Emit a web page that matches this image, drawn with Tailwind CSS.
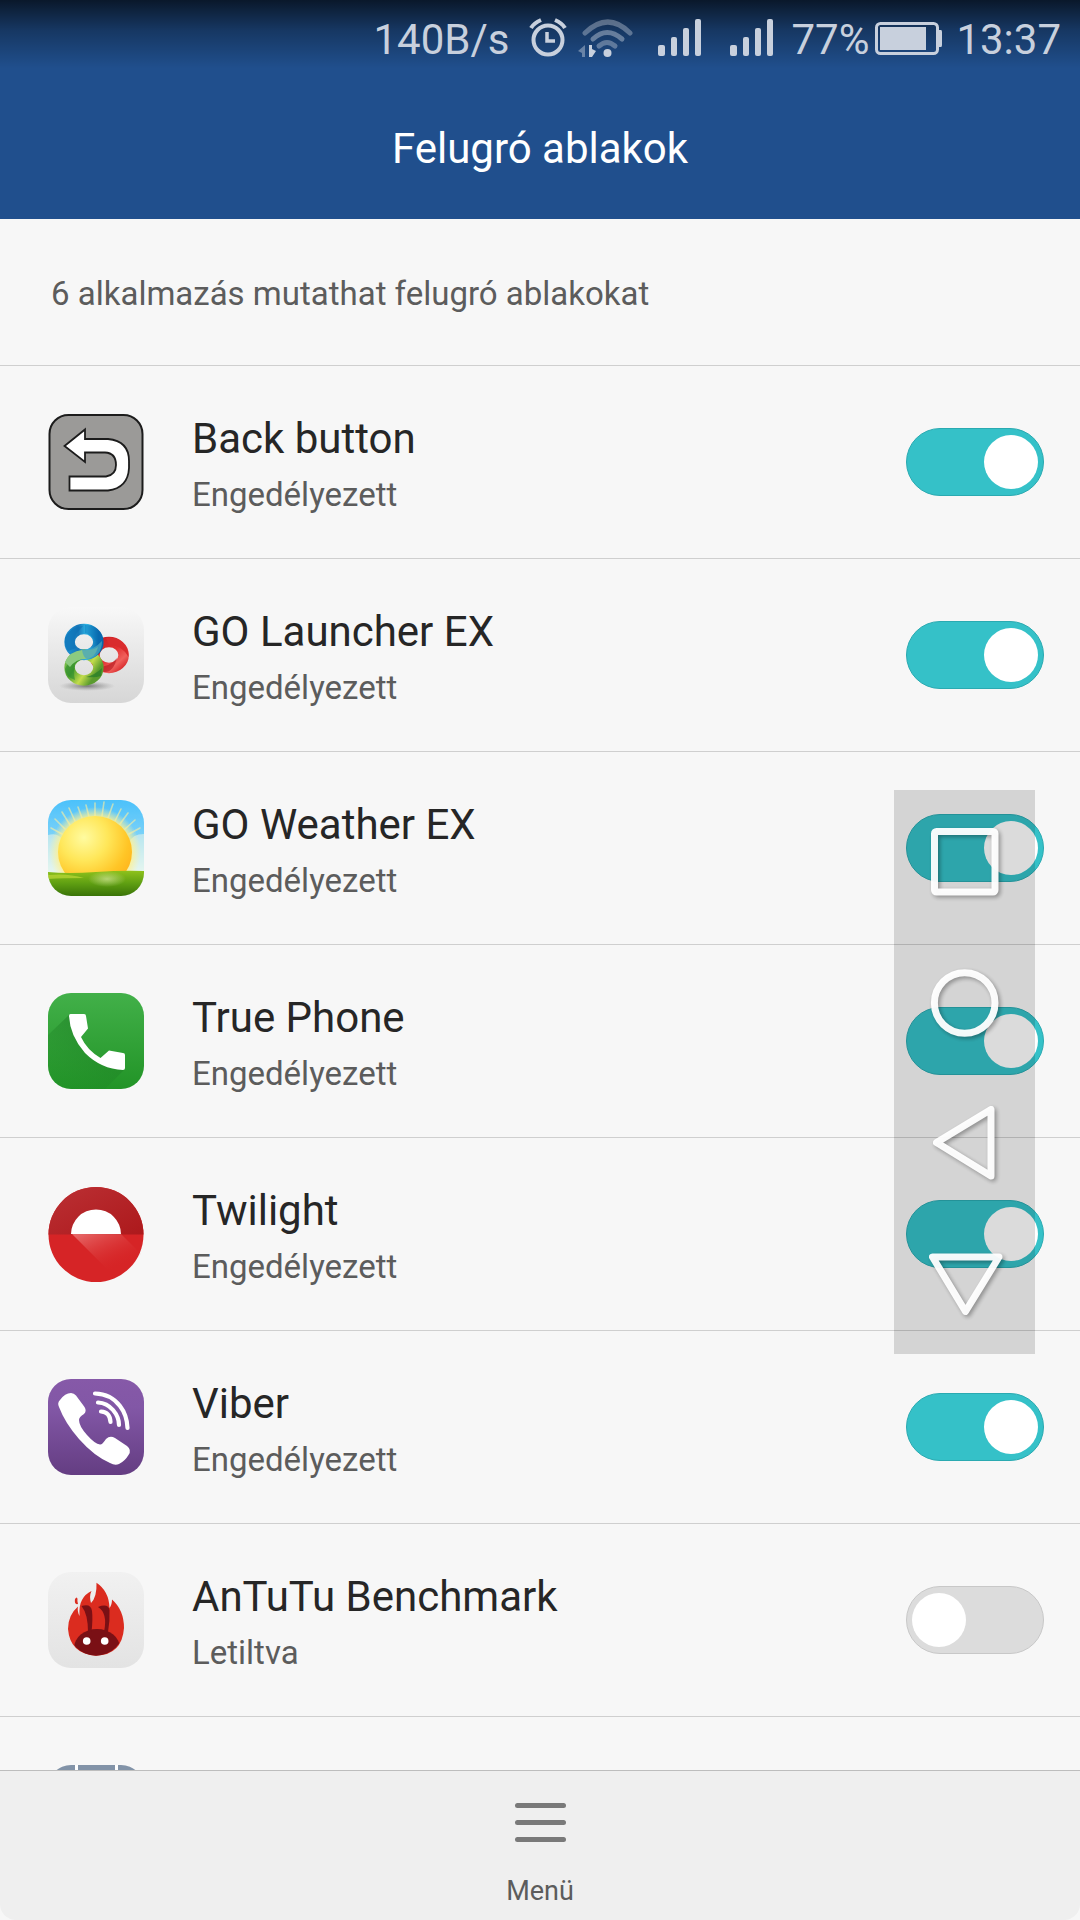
<!DOCTYPE html>
<html lang="hu">
<head>
  <meta charset="UTF-8" />
  <meta name="viewport" content="width=device-width, initial-scale=1" />
  <title>Felugró ablakok</title>
  <script src="https://cdn.jsdelivr.net/npm/@tailwindcss/browser@4"></script>
</head>
<body class="bg-[#f7f7f7] text-[#262626] font-['Roboto',sans-serif]">
<div class="h-screen flex flex-col overflow-hidden">

  <!-- Header -->
  <header class="bg-[#204f8d] shrink-0">
    <div class="h-[76px] flex items-center justify-end pr-[19px] bg-linear-to-b from-black/70 via-black/30 via-40% to-transparent to-90% text-[42px] leading-[48px] text-[#c8d0dd]">
      <span class="pt-[3px]">140B/s</span>
      <svg class="ml-[20px] w-[38px] h-[40px]" viewBox="0 0 38 40" fill="none" stroke="currentColor" stroke-width="4">
        <circle cx="19" cy="22" r="14.5" />
        <path d="M18 14v9h8" stroke-width="3.5" />
        <path d="M2 10Q5 5 12 2M36 10Q33 5 26 2" stroke-width="4" />
      </svg>
      <svg class="ml-[10px] w-[56px] h-[40px]" viewBox="0 0 56 40" fill="none" stroke="currentColor" stroke-width="5" stroke-linecap="round">
        <path d="M8 15Q31 -7 53 15" opacity=".4" />
        <path d="M16 21Q30 8 45 21" opacity=".45" />
        <path d="M22 28Q30 21 38 28" opacity=".4" />
        <circle cx="30.500" cy="35" r="4" fill="currentColor" stroke="none" />
        <path d="M8 27v12H5V35L1 33z" fill="currentColor" stroke="none" opacity=".45" />
        <path d="M12 27h3v4l4 2-4 6h-3z" fill="currentColor" stroke="none" />
      </svg>
      <svg class="ml-[25px] w-[44px] h-[38px]" viewBox="0 0 44 38" fill="currentColor">
        <rect x="0" y="26" width="7" height="11" rx="2" /><rect x="13" y="18" width="6" height="19" rx="2" />
        <rect x="25" y="9" width="6" height="28" rx="2" /><rect x="37" y="0" width="6" height="37" rx="2" />
      </svg>
      <svg class="ml-[28px] w-[44px] h-[38px]" viewBox="0 0 44 38" fill="currentColor">
        <rect x="0" y="26" width="7" height="11" rx="2" /><rect x="13" y="18" width="6" height="19" rx="2" />
        <rect x="25" y="9" width="6" height="28" rx="2" /><rect x="37" y="0" width="6" height="37" rx="2" />
      </svg>
      <span class="ml-[17px] pt-[3px]">77%</span>
      <svg class="ml-[6px] w-[67px] h-[33px]" viewBox="0 0 67 33">
        <rect x="1.500" y="1.500" width="61" height="30" rx="4" fill="none" stroke="currentColor" stroke-width="3" />
        <rect x="5" y="5" width="46" height="23" fill="currentColor" />
        <path d="M64 8h2q1 0 1 2v13q0 2-1 2h-2z" fill="currentColor" />
      </svg>
      <span class="ml-[14px] pt-[3px]">13:37</span>
    </div>
    <h1 class="h-[143px] pt-[45px] text-center text-[42px] leading-[56px] text-white">Felugró ablakok</h1>
  </header>

  <!-- App list -->
  <main class="flex-1 min-h-0 overflow-hidden">
    <p class="h-[147px] flex items-center pt-1 pl-[51px] border-b border-[#cfcfcf] text-[33px] leading-[44px] text-[#5c5c5c]">6 alkalmazás mutathat felugró ablakokat</p>

    <ul>
      <li class="h-[193px] flex items-center pl-12 pr-9 border-b border-[#cfcfcf]">
        <svg class="w-24 h-24 shrink-0" viewBox="0 0 96 96">
          <rect x="1.500" y="1" width="93" height="94" rx="19" fill="#9b9a98" stroke="#1c1c1c" stroke-width="2" />
          <path d="M16.500 32L37 15.500V25H60Q81 27 81 47V54Q80 74 60 76.500H21.500V62.500H58Q68 61 68 51Q68 39 57 38.500H37V48z" fill="#fff" stroke="#1c1c1c" stroke-width="1.800" />
        </svg>
        <label for="app-back" class="flex-1 pt-[2px] pl-12">
          <span class="block text-[42px] leading-[60px]">Back button</span>
          <span class="block mt-1 text-[33px] leading-[44px] text-[#5c5c5c]">Engedélyezett</span>
        </label>
        <input id="app-back" type="checkbox" role="switch" checked class="appearance-none shrink-0 w-[138px] h-[68px] rounded-full border border-[#c8c8c8] bg-[#dcdcdc] checked:border-[#2aaab1] checked:bg-[#35c1c8] before:block before:content-[''] before:mt-[6px] before:ml-[5px] before:w-[54px] before:h-[54px] before:rounded-full before:bg-white checked:before:ml-[77px]" />
      </li>

      <li class="h-[193px] flex items-center pl-12 pr-9 border-b border-[#cfcfcf]">
        <svg class="w-24 h-24 shrink-0" viewBox="0 0 96 96">
          <defs>
            <linearGradient id="plate" x2="0" y2="1"><stop stop-color="#f8f8f8" /><stop offset="1" stop-color="#d6d6d6" /></linearGradient>
            <linearGradient id="blue"><stop stop-color="#1c8ccc" /><stop offset=".3" stop-color="#1776b8" /><stop offset=".6" stop-color="#2fb7e6" /><stop offset="1" stop-color="#0768ac" /></linearGradient>
            <linearGradient id="green" x2="1" y2=".6"><stop stop-color="#7cc04a" /><stop offset=".35" stop-color="#4c9f30" /><stop offset=".7" stop-color="#c3dc4c" /><stop offset="1" stop-color="#5a9b2e" /></linearGradient>
            <linearGradient id="red" x2="1" y2="1"><stop stop-color="#c71f25" /><stop offset=".5" stop-color="#e22f30" /><stop offset=".8" stop-color="#f0605c" /><stop offset="1" stop-color="#d82a2c" /></linearGradient>
            <radialGradient id="shade"><stop stop-color="#555" stop-opacity=".75" /><stop offset="1" stop-color="#888" stop-opacity="0" /></radialGradient>
          </defs>
          <rect width="96" height="96" rx="23" fill="url(#plate)" />
          <ellipse cx="39" cy="79" rx="28" ry="5" fill="url(#shade)" />
          <ellipse cx="61" cy="48" rx="14.600" ry="13" fill="none" stroke="url(#red)" stroke-width="10.500" />
          <path d="M58 31Q70 29 77 38Q81 43 80.500 50Q74 38 61 38z" fill="#d92b2d" />
          <path d="M49 60Q62 60 69 51Q65 66 56 65z" fill="#b3151c" opacity=".6" />
          <ellipse cx="36" cy="60.500" rx="14.400" ry="13" fill="none" stroke="url(#green)" stroke-width="10.500" />
          <path d="M17 62Q21 50 35 51L27 56Q25 66 27 73Q18 70 17 62z" fill="#2c8c2f" opacity=".6" />
          <path d="M38 70Q47 68 54 61L53 69Q47 71 38 70z" fill="#237b2a" opacity=".7" />
          <ellipse cx="36" cy="35" rx="14.400" ry="13" fill="none" stroke="url(#blue)" stroke-width="10.500" />
          <path d="M17 31Q23 19 35 19L28 27Q25 34 28 41L20 44Q16 38 17 31z" fill="#0d6fb4" opacity=".6" />
          <path d="M37 18Q49 17 54 29L55 37L51 43Q50 30 37 26z" fill="#0a6db4" opacity=".4" />
          <path d="M17 55Q22 44 34 43Q43 44 50 40Q47 52 37 52Q28 52 22 60z" fill="#8cca80" />
          <path d="M34 43Q45 44 54 34Q54 50 39 52Q35 50 34 43z" fill="#4aa5bd" opacity=".75" />
        </svg>
        <label for="app-launcher" class="flex-1 pt-[2px] pl-12">
          <span class="block text-[42px] leading-[60px]">GO Launcher EX</span>
          <span class="block mt-1 text-[33px] leading-[44px] text-[#5c5c5c]">Engedélyezett</span>
        </label>
        <input id="app-launcher" type="checkbox" role="switch" checked class="appearance-none shrink-0 w-[138px] h-[68px] rounded-full border border-[#c8c8c8] bg-[#dcdcdc] checked:border-[#2aaab1] checked:bg-[#35c1c8] before:block before:content-[''] before:mt-[6px] before:ml-[5px] before:w-[54px] before:h-[54px] before:rounded-full before:bg-white checked:before:ml-[77px]" />
      </li>

      <li class="h-[193px] flex items-center pl-12 pr-9 border-b border-[#cfcfcf]">
        <svg class="w-24 h-24 shrink-0" viewBox="0 0 96 96">
          <defs>
            <clipPath id="tile"><rect width="96" height="96" rx="23" /></clipPath>
            <linearGradient id="sky" x2="0" y2="1"><stop stop-color="#4cc1fb" /><stop offset=".4" stop-color="#7fd3f8" /><stop offset=".75" stop-color="#e4f6f8" /></linearGradient>
            <radialGradient id="glow"><stop offset=".75" stop-color="#fff08a" /><stop offset="1" stop-color="#fff3a0" stop-opacity="0" /></radialGradient>
            <radialGradient id="sun" cx=".35" cy=".3" r=".8"><stop stop-color="#fffba0" /><stop offset=".4" stop-color="#ffe75a" /><stop offset=".75" stop-color="#ffc526" /><stop offset="1" stop-color="#ffb01a" /></radialGradient>
            <linearGradient id="grass" x2="0" y2="1"><stop stop-color="#8fc21c" /><stop offset=".5" stop-color="#5f9f12" /><stop offset="1" stop-color="#3a7308" /></linearGradient>
            <radialGradient id="haze"><stop stop-color="#e3efb0" stop-opacity=".6" /><stop offset="1" stop-color="#e3efb0" stop-opacity="0" /></radialGradient>
          </defs>
          <g clip-path="url(#tile)">
            <rect width="96" height="96" fill="url(#sky)" />
            <path d="M0 35Q12 32 15 42V73H0zM96 34Q84 34 82 42V73H96z" fill="#e6f5ea" opacity=".6" />
            <g stroke="#ffef9e" stroke-width="1.600" stroke-linecap="round" opacity=".6">
              <path d="M47 16V3M41 17L38 5M34 18L30 7M27 21L21 8M22 25L14 12M17 29L7 19M14 34L3 28M54 16L56 2M60 18L65 4M67 21L73 9M72 24L80 13M77 29L87 20M81 34L92 28" />
            </g>
            <ellipse cx="47" cy="52" rx="46" ry="45" fill="url(#glow)" />
            <ellipse cx="47" cy="52" rx="37" ry="36" fill="url(#sun)" />
            <path d="M0 72Q20 74 48 72T96 71V96H0z" fill="url(#grass)" />
            <path d="M0 75Q20 73 36 78Q16 78 0 79z" fill="#c8e03c" opacity=".6" />
            <ellipse cx="59" cy="79" rx="19" ry="8" fill="url(#haze)" />
          </g>
        </svg>
        <label for="app-weather" class="flex-1 pt-[2px] pl-12">
          <span class="block text-[42px] leading-[60px]">GO Weather EX</span>
          <span class="block mt-1 text-[33px] leading-[44px] text-[#5c5c5c]">Engedélyezett</span>
        </label>
        <input id="app-weather" type="checkbox" role="switch" checked class="appearance-none shrink-0 w-[138px] h-[68px] rounded-full border border-[#c8c8c8] bg-[#dcdcdc] checked:border-[#2aaab1] checked:bg-[#35c1c8] before:block before:content-[''] before:mt-[6px] before:ml-[5px] before:w-[54px] before:h-[54px] before:rounded-full before:bg-white checked:before:ml-[77px]" />
      </li>

      <li class="h-[193px] flex items-center pl-12 pr-9 border-b border-[#cfcfcf]">
        <svg class="w-24 h-24 shrink-0" viewBox="0 0 96 96">
          <defs>
            <linearGradient id="phone" x2="0" y2="1"><stop stop-color="#42b049" /><stop offset="1" stop-color="#229427" /></linearGradient>
            <linearGradient id="cast" x1="1" y1="0" x2=".2" y2="1"><stop stop-color="#1f7a26" stop-opacity=".8" /><stop offset="1" stop-color="#1f8a26" stop-opacity=".1" /></linearGradient>
          </defs>
          <g clip-path="url(#tile)">
            <rect width="96" height="96" fill="url(#phone)" />
            <path d="M21 22L0 42V96H57L76 77L40 60z" fill="url(#cast)" />
          </g>
          <path d="M22.500 21H36Q38 21 38 23L40 35.500L33 44Q39 57 52.500 65L61 57.500L75 60Q77 60 77 62V75Q77 77 75 77Q53 76 37 60Q22 43 21 23Q21 21 22.500 21z" fill="#fff" />
        </svg>
        <label for="app-phone" class="flex-1 pt-[2px] pl-12">
          <span class="block text-[42px] leading-[60px]">True Phone</span>
          <span class="block mt-1 text-[33px] leading-[44px] text-[#5c5c5c]">Engedélyezett</span>
        </label>
        <input id="app-phone" type="checkbox" role="switch" checked class="appearance-none shrink-0 w-[138px] h-[68px] rounded-full border border-[#c8c8c8] bg-[#dcdcdc] checked:border-[#2aaab1] checked:bg-[#35c1c8] before:block before:content-[''] before:mt-[6px] before:ml-[5px] before:w-[54px] before:h-[54px] before:rounded-full before:bg-white checked:before:ml-[77px]" />
      </li>

      <li class="h-[193px] flex items-center pl-12 pr-9 border-b border-[#cfcfcf]">
        <svg class="w-24 h-24 shrink-0" viewBox="0 0 96 96">
          <defs>
            <linearGradient id="dusk" x2="1" y2="1"><stop stop-color="#bb3034" /><stop offset="1" stop-color="#ad191c" /></linearGradient>
            <linearGradient id="beam" x1=".1" y1="0" x2=".7" y2=".8"><stop stop-color="#ea7474" stop-opacity=".85" /><stop offset="1" stop-color="#d62424" stop-opacity="0" /></linearGradient>
          </defs>
          <circle cx="48" cy="48.500" r="47.500" fill="#d62426" />
          <path d="M0.500 48.500A47.500 47.500 0 0 1 95.500 48.500z" fill="url(#dusk)" />
          <path d="M24 48H73L93 68L66 90z" fill="url(#beam)" />
          <path d="M23 48A25 24.500 0 0 1 73 48z" fill="#fff" />
        </svg>
        <label for="app-twilight" class="flex-1 pt-[2px] pl-12">
          <span class="block text-[42px] leading-[60px]">Twilight</span>
          <span class="block mt-1 text-[33px] leading-[44px] text-[#5c5c5c]">Engedélyezett</span>
        </label>
        <input id="app-twilight" type="checkbox" role="switch" checked class="appearance-none shrink-0 w-[138px] h-[68px] rounded-full border border-[#c8c8c8] bg-[#dcdcdc] checked:border-[#2aaab1] checked:bg-[#35c1c8] before:block before:content-[''] before:mt-[6px] before:ml-[5px] before:w-[54px] before:h-[54px] before:rounded-full before:bg-white checked:before:ml-[77px]" />
      </li>

      <li class="h-[193px] flex items-center pl-12 pr-9 border-b border-[#cfcfcf]">
        <svg class="w-24 h-24 shrink-0" viewBox="0 0 96 96">
          <defs>
            <linearGradient id="violet" x2="0" y2="1"><stop stop-color="#8659a8" /><stop offset=".3" stop-color="#8257a6" /><stop offset="1" stop-color="#643d82" /></linearGradient>
          </defs>
          <rect width="96" height="96" rx="23" fill="url(#violet)" />
          <path d="M12 21Q17 14 23 14Q26 14 28 16.500L36.500 28Q39 32 36 35Q31 38 31 41Q31 47 39 56Q47 65 52 65.500Q54 66 58 60Q62 56 67 59L79 67Q84 71 80.500 76Q77 82 71 85Q67 87 62 84Q46 77 31 60Q17 44 11 28Q9 24 12 21z" fill="#fff" />
          <g fill="none" stroke="#fff" stroke-width="4.200" stroke-linecap="round">
            <path d="M47 14.500Q63 15 72 27Q79 36 79.500 49" />
            <path d="M50 23.500Q59 24 65 31Q71 38 71 46" />
            <path d="M53 32.500Q62 33 62.500 43" />
          </g>
        </svg>
        <label for="app-viber" class="flex-1 pt-[2px] pl-12">
          <span class="block text-[42px] leading-[60px]">Viber</span>
          <span class="block mt-1 text-[33px] leading-[44px] text-[#5c5c5c]">Engedélyezett</span>
        </label>
        <input id="app-viber" type="checkbox" role="switch" checked class="appearance-none shrink-0 w-[138px] h-[68px] rounded-full border border-[#c8c8c8] bg-[#dcdcdc] checked:border-[#2aaab1] checked:bg-[#35c1c8] before:block before:content-[''] before:mt-[6px] before:ml-[5px] before:w-[54px] before:h-[54px] before:rounded-full before:bg-white checked:before:ml-[77px]" />
      </li>

      <li class="h-[193px] flex items-center pl-12 pr-9 border-b border-[#cfcfcf]">
        <svg class="w-24 h-24 shrink-0" viewBox="0 0 96 96">
          <defs>
            <linearGradient id="ash" x2="0" y2="1"><stop stop-color="#f1f1f1" /><stop offset="1" stop-color="#e3e3e3" /></linearGradient>
            <clipPath id="body"><ellipse cx="48" cy="56" rx="28" ry="27.700" /></clipPath>
          </defs>
          <rect width="96" height="96" rx="23" fill="url(#ash)" />
          <path d="M48.500 10.700Q61 19 61.500 36Q64 33 64 27.500Q76 38 76 56Q74 83 48 83.700Q22 82 20 57Q20 43 30 34.500Q29 39 31.500 44Q31 33 34 28Q37 22 43.500 19Q41 24 43 31Q49 25 48.500 10.700z" fill="#db2c1f" />
          <path d="M27 27Q29 24 29.500 27Q29 29 30 32Q26 33 27 27z" fill="#db2c1f" />
          <ellipse cx="49" cy="76" rx="23" ry="19" fill="#7a1015" clip-path="url(#body)" />
          <path d="M33.500 34Q43 31 44 39Q45 47 43.500 60H40Q40 42 33.500 34zM50 35Q60 31 61.500 38Q62 48 60 60H56Q60 41 50 35z" fill="#7a1015" />
          <circle cx="38.700" cy="69" r="3.800" fill="#fff" />
          <circle cx="56.700" cy="69" r="3.800" fill="#fff" />
        </svg>
        <label for="app-antutu" class="flex-1 pt-[2px] pl-12">
          <span class="block text-[42px] leading-[60px]">AnTuTu Benchmark</span>
          <span class="block mt-1 text-[33px] leading-[44px] text-[#5c5c5c]">Letiltva</span>
        </label>
        <input id="app-antutu" type="checkbox" role="switch" class="appearance-none shrink-0 w-[138px] h-[68px] rounded-full border border-[#c8c8c8] bg-[#dcdcdc] checked:border-[#2aaab1] checked:bg-[#35c1c8] before:block before:content-[''] before:mt-[6px] before:ml-[5px] before:w-[54px] before:h-[54px] before:rounded-full before:bg-white checked:before:ml-[77px]" />
      </li>

      <!-- scrolled under the bottom bar -->
      <li class="h-[193px] flex items-center pl-12 pr-9 border-b border-[#cfcfcf]">
        <svg class="w-24 h-24 shrink-0" viewBox="0 0 96 96">
          <rect width="96" height="96" rx="23" fill="#8293a8" />
          <path d="M27 0h3v96h-3zM67 0h3v96h-3z" fill="#fff" />
        </svg>
      </li>
    </ul>
  </main>

  <!-- Bottom bar -->
  <footer class="h-[150px] shrink-0 border-t border-[#bdbdbd] bg-[#efefef] rounded-b-2xl flex justify-center">
    <button type="button" class="flex flex-col items-center pt-8 text-[27px] leading-8 text-[#5c5c5c]">
      <svg class="w-[52px] h-[40px]" viewBox="0 0 52 40" fill="#797979">
        <rect x="1" width="51" height="5" rx="2.500" /><rect x="1" y="17" width="51" height="5" rx="2.500" /><rect x="1" y="34" width="51" height="5" rx="2.500" />
      </svg>
      <span class="mt-8">Menü</span>
    </button>
  </footer>
</div>

<!-- Floating navigation keys -->
<nav class="fixed right-[45px] top-[790px] flex flex-col bg-black/14">
  <button type="button" aria-label="Recents">
    <svg class="w-[141px] h-[141px] drop-shadow-[2px_2px_2px_rgba(0,0,0,0.35)]" viewBox="0 0 141 141" fill="none" stroke="#fff" stroke-opacity=".95" stroke-width="7"><rect x="40.500" y="41.500" width="60.500" height="60.500" rx="2" /></svg>
  </button>
  <button type="button" aria-label="Home">
    <svg class="w-[141px] h-[141px] drop-shadow-[2px_2px_2px_rgba(0,0,0,0.35)]" viewBox="0 0 141 141" fill="none" stroke="#fff" stroke-opacity=".95" stroke-width="7"><circle cx="70.700" cy="72" r="30.300" /></svg>
  </button>
  <button type="button" aria-label="Back">
    <svg class="w-[141px] h-[141px] drop-shadow-[2px_2px_2px_rgba(0,0,0,0.35)]" viewBox="0 0 141 141" fill="none" stroke="#fff" stroke-opacity=".95" stroke-width="7" stroke-linejoin="round"><path d="M42.500 70.500L97 37.500V104z" /></svg>
  </button>
  <button type="button" aria-label="Hide">
    <svg class="w-[141px] h-[141px] drop-shadow-[2px_2px_2px_rgba(0,0,0,0.35)]" viewBox="0 0 141 141" fill="none" stroke="#fff" stroke-opacity=".95" stroke-width="7" stroke-linejoin="round"><path d="M38.500 44H105L71.500 98.500z" /></svg>
  </button>
</nav>

</body>
</html>
